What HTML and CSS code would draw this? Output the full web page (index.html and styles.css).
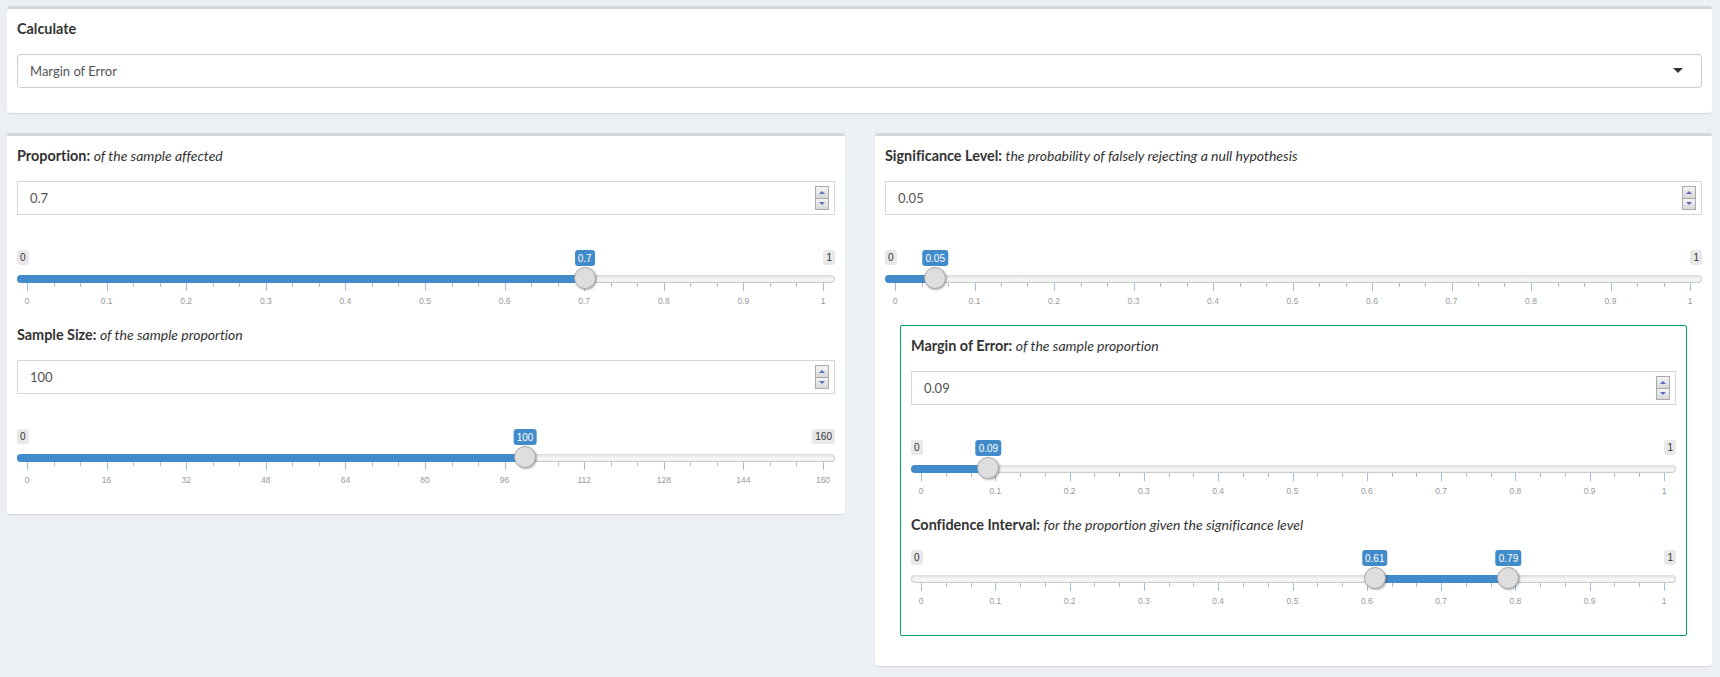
FILE: index.html
```html
<!DOCTYPE html>
<html lang="en">
<head>
  <meta charset="UTF-8" />
  <title>Sample Size Calculator</title>
  <link rel="stylesheet" href="styles.css">
</head>
<body>
  <div class="box">
    <h5 class="title">Calculate</h5>
    <div class="select">
      <span>Margin of Error</span>
      <i class="caret"></i>
    </div>
  </div>

  <div class="columns">
    <div class="box">
      <h5 class="title">Proportion: <em>of the sample affected</em></h5>
      <div class="number">0.7<div class="spinner"><b class="up"></b><b class="down"></b></div></div>
      <div class="slider" data-max="1" data-step="0.1" data-values="0.7"></div>

      <h5 class="title">Sample Size: <em>of the sample proportion</em></h5>
      <div class="number">100<div class="spinner"><b class="up"></b><b class="down"></b></div></div>
      <div class="slider" data-max="160" data-step="16" data-values="100"></div>
    </div>

    <div class="box">
      <h5 class="title">Significance Level: <em>the probability of falsely rejecting a null hypothesis</em></h5>
      <div class="number">0.05<div class="spinner"><b class="up"></b><b class="down"></b></div></div>
      <div class="slider" data-max="1" data-step="0.1" data-values="0.05"></div>

      <div class="result">
        <h5 class="title">Margin of Error: <em>of the sample proportion</em></h5>
        <div class="number">0.09<div class="spinner"><b class="up"></b><b class="down"></b></div></div>
        <div class="slider" data-max="1" data-step="0.1" data-values="0.09"></div>

        <h5 class="title">Confidence Interval: <em>for the proportion given the significance level</em></h5>
        <div class="slider slider-tight" data-max="1" data-step="0.1" data-values="0.61,0.79"></div>
      </div>
    </div>
  </div>
  <script src="script.js"></script>
</body>
</html>
```

FILE: styles.css
```css
body {
  margin: 0; padding: 6px 8px 11px 7px;
  background: #ecf0f5; color: #333;
  font-family: "Lato", "Liberation Sans", sans-serif; font-size: 13px;
  font-variant-ligatures: none;
}
.box {
  background: white; border-top: 3px solid #d2d6de; border-radius: 3px;
  box-shadow: 0 1px 1px rgba(0,0,0,0.1);
  padding: 10px 10px 10px;
}
.columns {
  display: grid; grid-template-columns: 838px 1fr; gap: 30px;
  align-items: start; margin-top: 20px;
}
.title {
  margin: 0 0 15px; font-size: 14.4px; line-height: 20px; font-weight: 700; color: #333;
}
.title em { font-size: 14px; font-weight: 400; }

.select, .number {
  display: flex; align-items: center; justify-content: space-between;
  box-sizing: border-box; height: 34px; padding: 0 5px 0 12px;
  color: #555;
}
.select { border: 1px solid #ccc; border-radius: 4px; margin-bottom: 15px; padding-right: 18px; }
.caret { border: 5px solid transparent; border-top: 5px solid #333; border-bottom: 0; margin-top: -2px; }
.number { border: 1px solid #d2d6de; }

.spinner { display: flex; flex-direction: column; width: 14px; height: 24px; border: 1px solid #aaa; box-sizing: border-box; }
.spinner b {
  flex: 1; display: flex; align-items: center; justify-content: center;
  background: linear-gradient(#f4f4f4, #d8d8d8);
}
.spinner .down { border-top: 1px solid #aaa; }
.spinner b::after { content: ""; border: 3px solid transparent; }
.spinner .up::after { border-top: 0; border-bottom: 3px solid #5a6fb8; }
.spinner .down::after { border-bottom: 0; border-top: 3px solid #5a6fb8; }

/* range slider */
.slider { position: relative; height: 60px; margin: 35px 0 15px; font-family: "Liberation Sans", Arial, sans-serif; }
.slider-tight { margin-top: 15px; }
.track {
  position: absolute; top: 25px; left: 0; right: 0; height: 8px; box-sizing: border-box;
  border: 1px solid #ccc; border-top-color: #ddd; border-radius: 4px;
  background: linear-gradient(#e4e4e4, #f8f8f8 60%, #eee);
}
.bar { position: absolute; top: 25px; height: 8px; background: #428bca; }
.bar-start { border-radius: 4px 0 0 4px; }
.edge, .bubble {
  position: absolute; top: 0; padding: 0 3px; font-size: 10px; border-radius: 3px;
  line-height: 16px;
}
.edge { background: #e8e8e8; color: #333; height: 15px; }
.edge-min { left: 0; }
.edge-max { right: 0; }
.bubble { background: #428bca; color: white; line-height: 17px; height: 16px; margin-left: 0.5px; transform: translateX(-50%); z-index: 2; }
.scale { position: absolute; top: 33px; left: 10px; right: 12px; }
.handle {
  position: absolute; top: -16px; width: 22px; height: 22px; box-sizing: border-box; margin-left: -10.5px;
  background: #dedede; border: 1px solid #aaa; border-radius: 50%;
  box-shadow: 1px 1px 2px rgba(0,0,0,0.3); z-index: 2;
}
.tick { position: absolute; top: 0; width: 1px; height: 4px; background: #bbb; }
.tick-major { height: 8px; background: #9fc0de; }
.tick-label { position: absolute; top: 12px; font-size: 8.5px; line-height: 12px; color: #999; transform: translateX(-50%); }

.result { border: 1px solid #00a65a; border-radius: 2px; margin: 0 15px 20px; padding: 10px; }
.result .slider:last-child { margin-bottom: 15px; }
```

FILE: script.js
```js
// builds the range sliders from their data attributes
document.querySelectorAll(".slider").forEach(function (el) {
  const max = Number(el.dataset.max);
  const step = Number(el.dataset.step);
  const values = el.dataset.values.split(",").map(Number);
  const width = el.clientWidth;
  const scaleWidth = width - 22;
  const pos = function (v) { return 10 + (v / max) * scaleWidth; };

  function add(parent, cls, text, left) {
    const node = document.createElement("div");
    node.className = cls;
    if (text !== null) node.textContent = text;
    if (left !== undefined) node.style.left = left;
    parent.appendChild(node);
    return node;
  }

  add(el, "track", null);
  const from = values.length > 1 ? pos(values[0]) : 0;
  const to = pos(values[values.length - 1]);
  const bar = add(el, values.length > 1 ? "bar" : "bar bar-start", null, from + "px");
  bar.style.width = (to - from) + "px";

  add(el, "edge edge-min", "0");
  add(el, "edge edge-max", String(max));

  const scale = add(el, "scale", null);
  for (let i = 0; i <= 30; i++) {
    const pct = (i / 30) * 100 + "%";
    add(scale, i % 3 === 0 ? "tick tick-major" : "tick", null, pct);
    if (i % 3 === 0) {
      const n = (i / 3) * step;
      add(scale, "tick-label", String(Math.round(n * 10) / 10), pct);
    }
  }

  values.forEach(function (v) {
    add(el, "bubble", String(v), pos(v) + "px");
    const pct = (v / max) * 100 + "%";
    add(scale, "handle", null, pct);
  });
});
```
